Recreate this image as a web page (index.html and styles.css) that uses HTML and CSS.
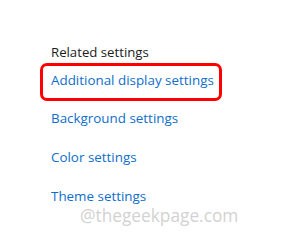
FILE: index.html
```html
<!DOCTYPE html>
<html lang="en">
<head>
<meta charset="utf-8">
<title>Related settings</title>
<link rel="stylesheet" href="styles.css">
</head>
<body>
<main class="panel">
  <h2 class="heading">Related settings</h2>
  <nav class="links">
    <a class="link link-highlight" href="#">Additional display settings</a>
    <a class="link" href="#">Background settings</a>
    <a class="link" href="#">Color settings</a>
    <a class="link" href="#">Theme settings</a>
  </nav>
  <p class="watermark">@thegeekpage.com</p>
</main>
</body>
</html>
```

FILE: styles.css
```css
html, body {
  margin: 0;
  padding: 0;
  background: #ffffff;
}

body {
  font-family: "Open Sans", "Noto Sans", sans-serif;
  width: 302px;
  height: 251px;
  overflow: hidden;
}

.panel {
  display: flex;
  flex-direction: column;
  align-items: flex-start;
  padding: 42px 0 0 51px;
}

.heading {
  margin: 0;
  font-size: 13.2px;
  font-weight: 400;
  line-height: 20px;
  color: #1b1b1b;
}

.links {
  display: flex;
  flex-direction: column;
  align-items: flex-start;
  gap: 19px;
  margin-top: 8px;
}

.link {
  font-size: 13.4px;
  line-height: 20px;
  color: #0f6ecb;
  text-decoration: none;
}

.link-highlight {
  position: relative;
  margin-bottom: -1px;
}

.link-highlight::after {
  content: "";
  position: absolute;
  left: -11px;
  top: -7px;
  width: 182px;
  height: 38px;
  box-sizing: border-box;
  border: 3px solid #ff0000;
  border-radius: 7px;
}

.watermark {
  margin: 0 0 0 29px;
  font-size: 17.3px;
  line-height: 20px;
  color: #d2d2d2;
}
```
